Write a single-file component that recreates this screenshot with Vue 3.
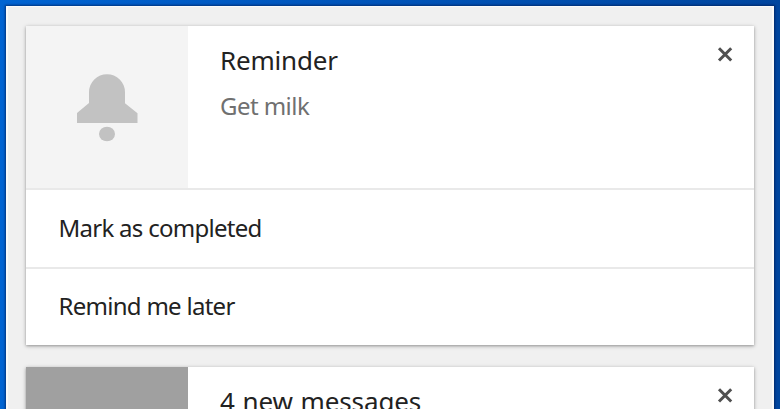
<template>
  <div class="desktop">
    <div class="center">
      <section v-for="item in notifications" :key="item.id" class="notification">
        <div class="body">
          <div class="icon" :class="item.type">
            <svg v-if="item.type === 'reminder'" width="162" height="162" viewBox="0 0 162 162">
              <path d="M63 66.200a18 18 0 0 1 36 0v11l12.500 10v9.800H51V87L63 77z" />
              <ellipse cx="81" cy="108" rx="8" ry="7.300" />
            </svg>
          </div>
          <div class="content">
            <h2 class="title" :class="item.type">{{ item.title }}</h2>
            <p v-if="item.message" class="message">{{ item.message }}</p>
          </div>
          <button class="close" aria-label="Close" @click="dismiss(item.id)">
            <svg width="16" height="16" viewBox="0 0 16 16">
              <path d="M2 2.300l12.200 12.200M14.200 2.300L2 14.500" />
            </svg>
          </button>
        </div>
        <button v-for="action in item.actions" :key="action.label" class="action">
          {{ action.label }}
        </button>
      </section>
    </div>
  </div>
</template>

<script setup>
import { ref } from 'vue';

const notifications = ref([
  {
    id: 1,
    type: 'reminder',
    title: 'Reminder',
    message: 'Get milk',
    actions: [
      { label: 'Mark as completed' },
      { label: 'Remind me later' }
    ]
  },
  {
    id: 2,
    type: 'messages',
    title: '4 new messages',
    message: '',
    actions: []
  }
]);

const dismiss = (id) => {
  notifications.value = notifications.value.filter((item) => item.id !== id);
};
</script>

<style>
body {
  margin: 0;
  overflow: hidden;
}
</style>

<style scoped>
.desktop {
  box-sizing: border-box;
  width: 780px;
  height: 409px;
  padding: 6px 6px 0;
  overflow: hidden;
  background: linear-gradient(90deg, #0064d2 0%, #0058c0 35%, #00469f 100%);
  font-family: 'Noto Sans', 'Open Sans', sans-serif;
}

.center {
  box-sizing: border-box;
  height: 430px;
  padding: 19px 18px 0;
  display: flex;
  flex-direction: column;
  gap: 22px;
  background: #f0f0f0;
  border: 2px solid #fafafa;
  border-top-width: 1px;
  box-shadow: 0 0 2px 1px rgba(0, 20, 70, 0.6);
}

.notification {
  flex: none;
  background: #fff;
  box-shadow: 0 1px 4px rgba(0, 0, 0, 0.3), 0 1px 2px rgba(0, 0, 0, 0.15);
}

.body {
  display: flex;
  height: 162px;
}

.icon {
  flex: none;
  width: 162px;
  background: #f4f4f4;
}

.icon.messages {
  background: #a0a0a0;
}

.icon svg {
  display: block;
  fill: #c2c2c2;
}

.content {
  flex: 1;
  padding: 15px 0 0 32px;
}

.title {
  margin: 0;
  font-size: 26px;
  font-weight: 400;
  line-height: 38px;
  letter-spacing: -0.2px;
  color: #222;
}

.title.messages {
  letter-spacing: -0.1px;
  word-spacing: 1px;
}

.message {
  margin: 10px 0 0;
  font-size: 24px;
  line-height: 34px;
  letter-spacing: -0.55px;
  color: #707070;
}

.close {
  flex: none;
  align-self: flex-start;
  margin: 20px 21px 0 0;
  padding: 0;
  border: 0;
  background: none;
  line-height: 0;
}

.close path {
  fill: none;
  stroke: #505050;
  stroke-width: 3;
}

.action {
  display: block;
  box-sizing: border-box;
  width: 100%;
  height: 79px;
  padding: 0 33px 3px 32.5px;
  border: 0;
  border-top: 2px solid #e9e9e9;
  background: #fff;
  font-family: inherit;
  font-size: 24px;
  letter-spacing: -0.72px;
  text-align: left;
  color: #222;
}

.action:last-child {
  height: 78px;
}
</style>
